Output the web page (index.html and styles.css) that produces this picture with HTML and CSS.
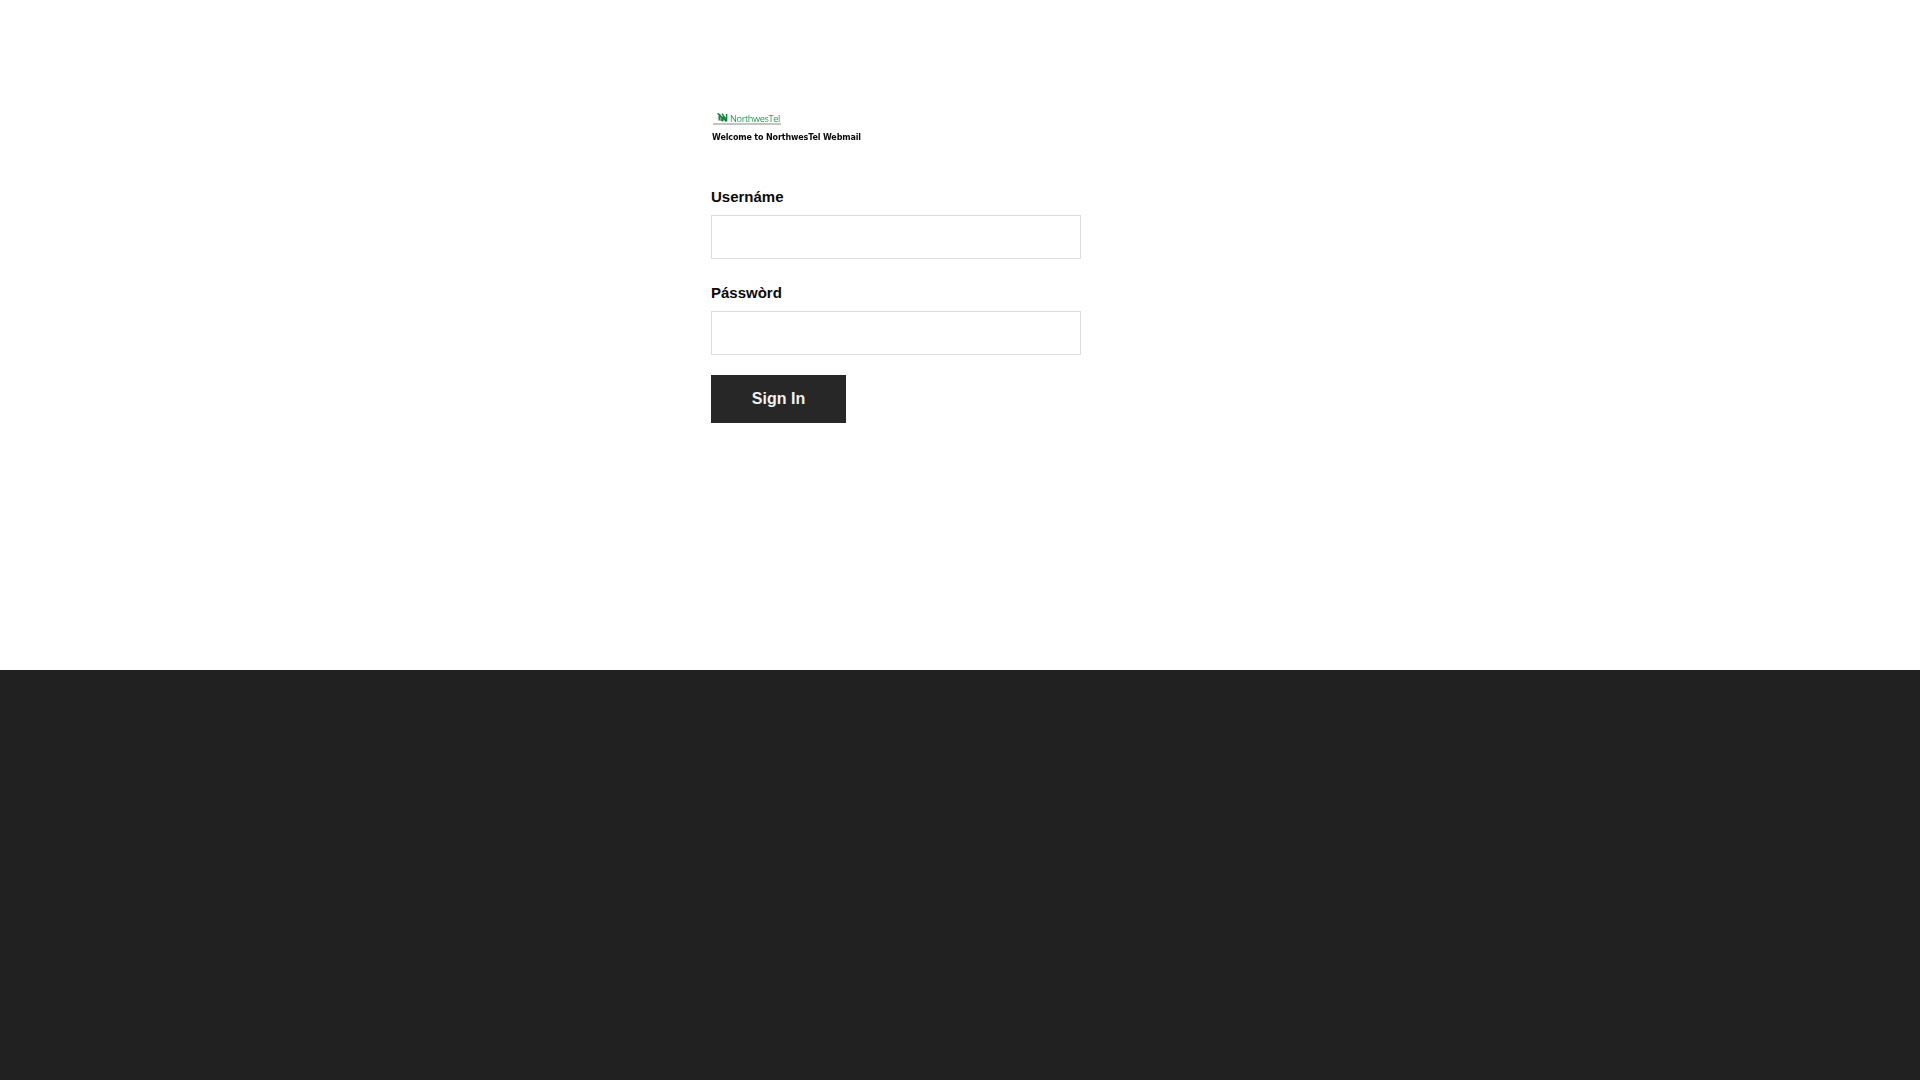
FILE: index.html
```html
<!DOCTYPE html>
<html lang="en">
<head>
<meta charset="utf-8">
<title>NorthwesTel Webmail</title>
<link rel="stylesheet" href="styles.css">
</head>
<body>
<main class="main">
  <form class="login">
    <div class="logo">
      <div class="brand">
        <svg class="mark" viewBox="0 0 11 9" width="11" height="9" aria-hidden="true">
          <path d="M0.8 0.4L4.2 4.6V8M0.8 0.4V1.2M2.2 3V7.6M2.2 1.2L5 4.8" stroke="#17853a" stroke-width="1.5" fill="none"/>
          <path d="M5 0.6L9.2 6.6M5.8 3.4V8.6M5.8 4.6L9.4 8.6M9.6 1V8.6" stroke="#17853a" stroke-width="1.5" fill="none"/>
        </svg>
        <span class="brand-name">NorthwesTel</span>
      </div>
      <div class="welcome">Welcome to NorthwesTel Webmail</div>
    </div>
    <label class="label" for="user">Usernáme</label>
    <input class="field field-user" id="user" type="text">
    <label class="label" for="pass">Pásswòrd</label>
    <input class="field" id="pass" type="password">
    <button class="submit" type="button">Sign In</button>
  </form>
</main>
<footer class="footer"></footer>
</body>
</html>
```
FILE: styles.css
```css
* { box-sizing: border-box; }
html, body { margin: 0; height: 100%; }
body {
  display: flex;
  flex-direction: column;
  height: 1080px;
  overflow: hidden;
  background: #fff;
  font-family: "Liberation Sans", Arial, sans-serif;
  color: #0a0a0a;
}
.main { height: 670px; padding: 110px 0 0 711px; }
.login { width: 370px; display: flex; flex-direction: column; align-items: flex-start; }
.logo { width: 150px; height: 77px; padding-left: 2px; filter: blur(0.3px); }
.brand {
  width: 68px;
  height: 15px;
  padding-left: 4px;
  display: flex;
  align-items: flex-start;
  gap: 2px;
  border-bottom: 2px solid #c4c4c4;
}
.mark { flex: none; margin-top: 3px; }
.brand-name {
  font-family: "Open Sans", sans-serif;
  font-size: 9.2px;
  line-height: 13px;
  margin-top: 2px;
  letter-spacing: -0.4px;
  color: #2f9a55;
  white-space: nowrap;
}
.welcome {
  margin-top: 7px;
  margin-left: -1px;
  font-family: "DejaVu Sans", Verdana, sans-serif;
  font-weight: 700;
  font-size: 8px;
  line-height: 11px;
  letter-spacing: -0.14px;
  color: #0a0a0a;
  white-space: nowrap;
}
.label {
  display: block;
  font-size: 15px;
  font-weight: 700;
  line-height: 20px;
  margin-bottom: 8px;
  color: #0a0a0a;
}
.field {
  display: block;
  width: 370px;
  height: 44px;
  margin: 0 0 20px;
  border: 1px solid #ddd;
  background: #fff;
  outline: none;
}
.field-user { margin-bottom: 24px; }
.submit {
  width: 135px;
  height: 48px;
  border: 0;
  padding: 0;
  background: #272727;
  color: #f2f2f2;
  font-family: inherit;
  font-size: 16px;
  font-weight: 700;
}
.footer { flex: 1; background: #212121; }
```
